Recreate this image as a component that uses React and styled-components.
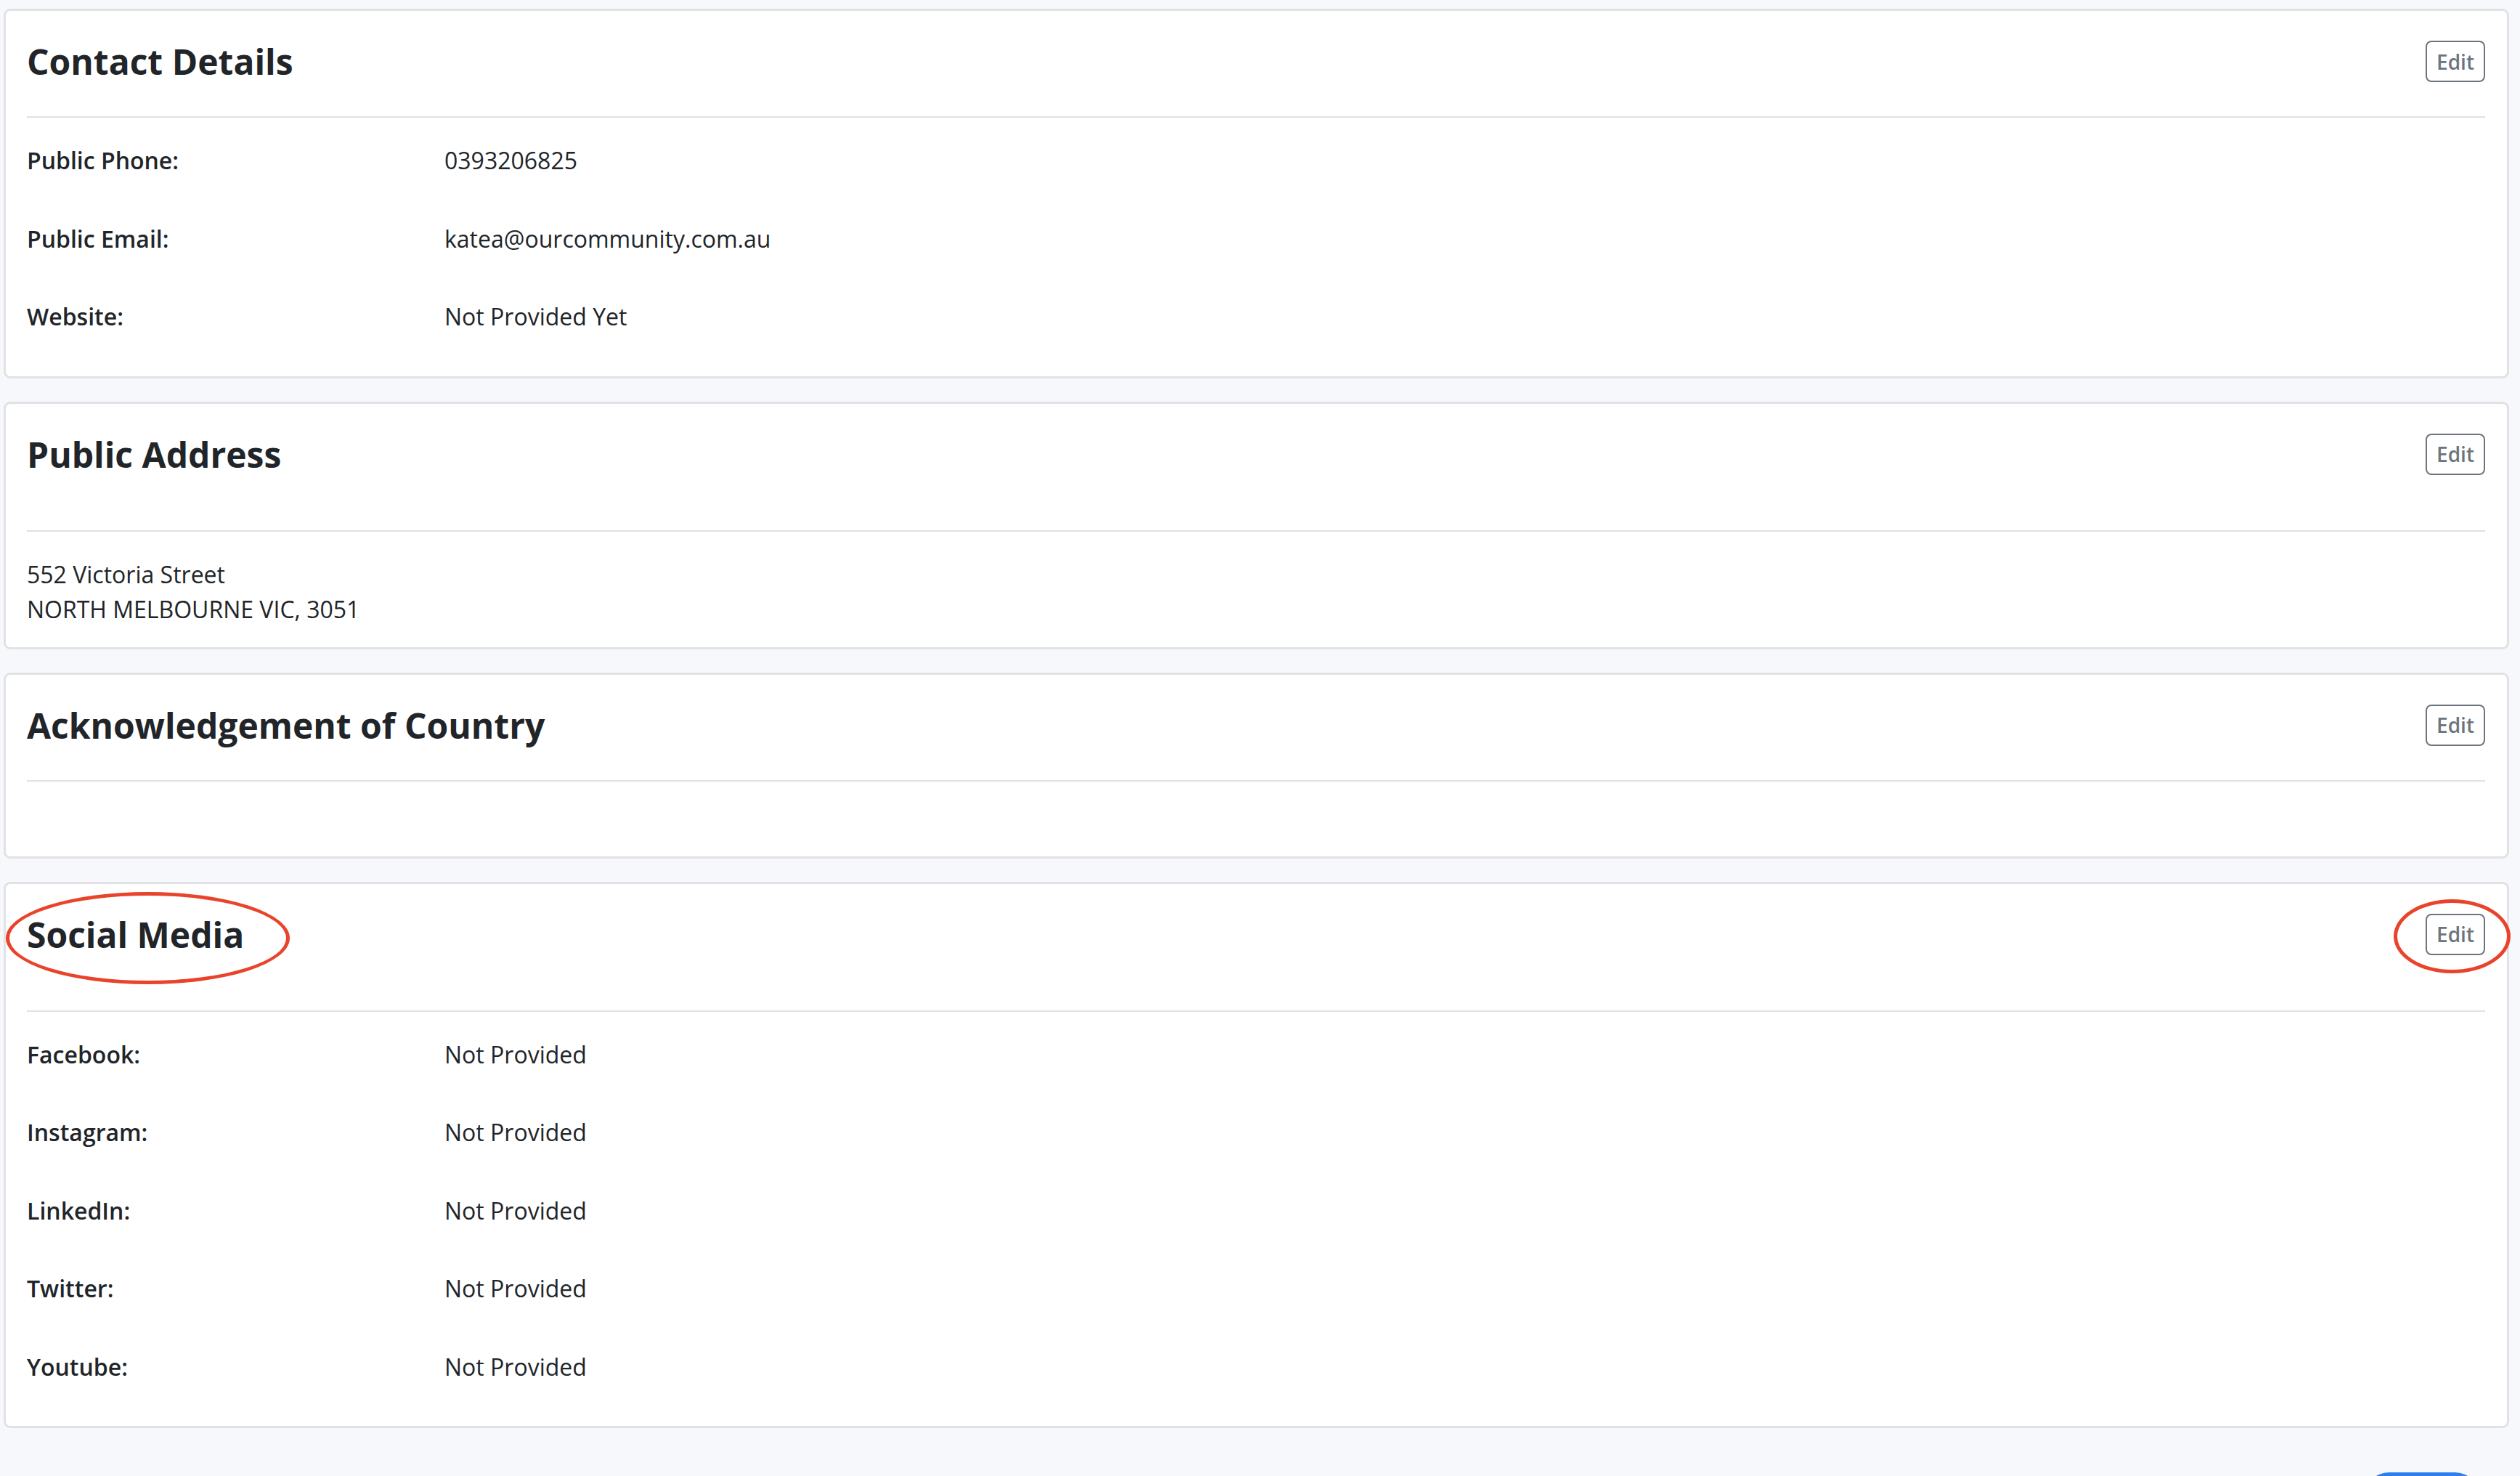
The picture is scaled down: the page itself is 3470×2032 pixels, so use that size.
import styled, { createGlobalStyle } from 'styled-components';

const CONTACT_ROWS = [
    { label: 'Public Phone:', value: '0393206825' },
    { label: 'Public Email:', value: 'katea@ourcommunity.com.au' },
    { label: 'Website:', value: 'Not Provided Yet' },
];

const SOCIAL_ROWS = [
    { label: 'Facebook:', value: 'Not Provided' },
    { label: 'Instagram:', value: 'Not Provided' },
    { label: 'LinkedIn:', value: 'Not Provided' },
    { label: 'Twitter:', value: 'Not Provided' },
    { label: 'Youtube:', value: 'Not Provided' },
];

const GlobalStyle = createGlobalStyle`
    html, body {
        margin: 0;
        padding: 0;
        background: #f7f8fb;
    }

    body {
        font-family: 'Open Sans', 'Noto Sans', 'Liberation Sans', sans-serif;
        color: #212529;
    }
`;

const DetailRows = ({ rows }) => (
    <>
        {rows.map((row) => (
            <Row key={row.label}>
                <Label>{row.label}</Label>
                <Value>{row.value}</Value>
            </Row>
        ))}
    </>
);

const Section = ({ title, spaced, highlighted, empty, children }) => (
    <Card>
        <Header>
            <TitleWrap>
                <Title>{title}</Title>
                {highlighted && <TitleCircle />}
            </TitleWrap>
            <EditWrap>
                <EditButton type="button">Edit</EditButton>
                {highlighted && <EditCircle />}
            </EditWrap>
        </Header>
        <Divider $spaced={spaced} />
        <Body $empty={empty}>{children}</Body>
    </Card>
);

const App = () => {
    return (
        <Page>
            <GlobalStyle />
            <Section title="Contact Details">
                <DetailRows rows={CONTACT_ROWS} />
            </Section>
            <Section title="Public Address" spaced>
                <Address>
                    552 Victoria Street
                    <br />
                    NORTH MELBOURNE VIC, 3051
                </Address>
            </Section>
            <Section title="Acknowledgement of Country" empty />
            <Section title="Social Media" spaced highlighted>
                <DetailRows rows={SOCIAL_ROWS} />
            </Section>
            <Footer>
                <PrimaryButton type="button" aria-label="Continue" />
            </Footer>
        </Page>
    );
};

const Page = styled.div`
    display: flex;
    flex-direction: column;
    gap: 32px;
    padding: 12px 15px 0 5px;
`;

const Card = styled.section`
    background: #fff;
    border: 3px solid #e1e2e5;
    border-radius: 9px;
    padding: 0 30px 28px 29px;
`;

const Header = styled.div`
    align-items: center;
    display: flex;
    height: 57px;
    justify-content: space-between;
    margin-top: 41px;
`;

const TitleWrap = styled.div`
    position: relative;
`;

const Title = styled.h2`
    font-size: 48px;
    font-weight: 700;
    line-height: 57px;
    margin: 0;
`;

const Circle = styled.span`
    border: 5px solid #e9442b;
    border-radius: 50%;
    box-sizing: border-box;
    pointer-events: none;
    position: absolute;
`;

const TitleCircle = styled(Circle)`
    height: 127px;
    left: -29px;
    top: -30px;
    width: 391px;
`;

const EditWrap = styled.div`
    position: relative;
`;

const EditCircle = styled(Circle)`
    height: 102px;
    left: -44px;
    top: -20px;
    width: 161px;
`;

const EditButton = styled.button`
    background: #fff;
    border: 2px solid #6c757d;
    border-radius: 8px;
    color: #6c757d;
    display: block;
    font-family: inherit;
    font-size: 28px;
    font-weight: 600;
    height: 57px;
    padding: 0;
    width: 82px;
`;

const Divider = styled.hr`
    border: 0;
    border-top: 2px solid #dee2e6;
    margin: ${(p) => (p.$spaced ? '76px' : '47px')} 0 0;
`;

const Body = styled.div`
    min-height: ${(p) => (p.$empty ? '75px' : '0')};
    padding-top: ${(p) => (p.$empty ? '0' : '5px')};
`;

const Row = styled.div`
    display: grid;
    font-size: 32px;
    grid-template-columns: 575px 1fr;
    line-height: 47.5px;
    padding: 30px 0;
`;

const Label = styled.div`
    font-weight: 600;
`;

const Value = styled.div`
    font-weight: 400;
`;

const Address = styled.div`
    font-size: 32px;
    line-height: 48px;
    padding-top: 30px;
`;

const Footer = styled.div`
    display: flex;
    justify-content: flex-end;
    padding: 29px 39px 0 0;
`;

const PrimaryButton = styled.button`
    background: #2d7ff0;
    border: 0;
    border-radius: 36px;
    height: 72px;
    width: 162px;
`;

export default App;
